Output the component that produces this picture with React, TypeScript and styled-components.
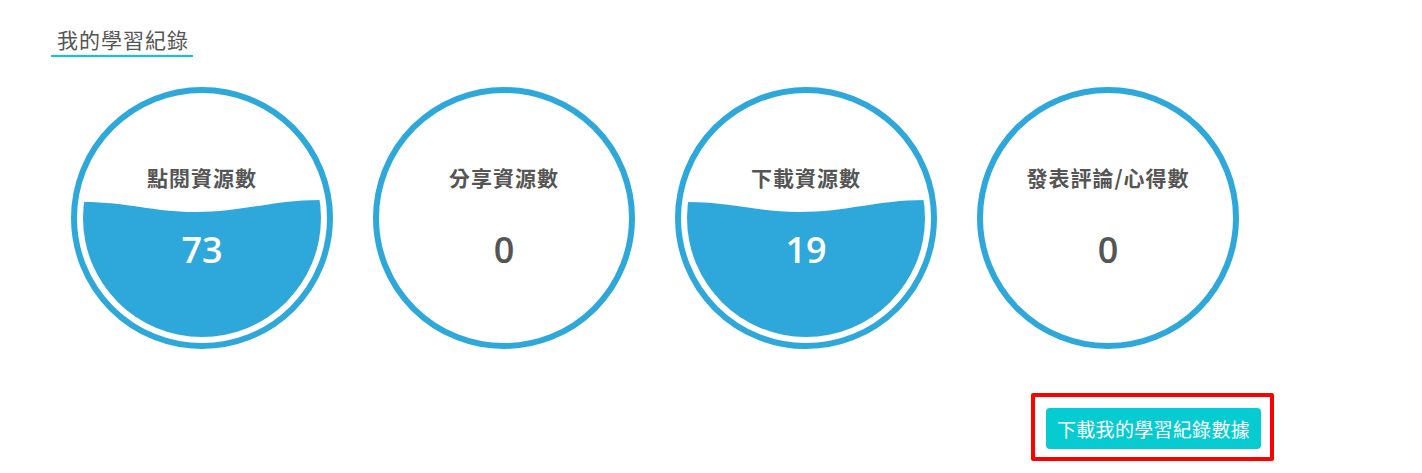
import React from 'react'
import styled, { createGlobalStyle } from 'styled-components'

const GlobalStyle = createGlobalStyle`
  body {
    margin: 0;
    background: #fff;
    font-family: "Open Sans", "Noto Sans CJK TC", sans-serif;
  }
`

const blue = '#2ea8db'
const teal = '#06ccd2'

const Page = styled.div`
  width: 1422px;
  height: 473px;
  padding: 26px 0 0 51px;
  box-sizing: border-box;
`

const SectionTitle = styled.h2`
  display: inline-block;
  margin: 0;
  padding: 0 0 3px 6px;
  width: 142px;
  box-sizing: border-box;
  border-bottom: 2px solid ${teal};
  font-family: "Noto Sans CJK TC", sans-serif;
  font-size: 21px;
  line-height: 26px;
  font-weight: 400;
  color: #555;
  letter-spacing: 1px;
`

const StatsRow = styled.div`
  display: flex;
  gap: 40px;
  margin: 30px 0 0 20px;
`

const Ring = styled.div`
  width: 262px;
  height: 262px;
  box-sizing: border-box;
  border: 6px solid ${blue};
  border-radius: 50%;
  padding: 6px;
`

const Face = styled.div`
  position: relative;
  width: 238px;
  height: 238px;
  border-radius: 50%;
  overflow: hidden;
  display: flex;
  flex-direction: column;
  align-items: center;
  padding-top: 64px;
  box-sizing: border-box;
`

const Water = styled.svg`
  position: absolute;
  inset: 0;
`

const Label = styled.div`
  position: relative;
  font-family: "Noto Sans CJK TC", sans-serif;
  font-size: 21px;
  line-height: 28px;
  font-weight: 700;
  color: #555;
  letter-spacing: 1px;
`

const Count = styled.div<{ $filled: boolean }>`
  position: relative;
  margin-top: 37px;
  font-family: "Open Sans", sans-serif;
  font-size: 36px;
  line-height: 44px;
  font-weight: 600;
  color: ${(p) => (p.$filled ? '#fff' : '#555')};
`

const Footer = styled.div`
  display: flex;
  justify-content: flex-end;
  width: 1223px;
  margin-top: 44px;
`

const Highlight = styled.div`
  border: 4px solid #ff0000;
  border-radius: 2px;
  padding: 11px 9px 8px 11px;
`

const DownloadButton = styled.button`
  width: 215px;
  height: 41px;
  border: none;
  border-radius: 4px;
  background: ${teal};
  color: #fff;
  font-family: "Noto Sans CJK TC", sans-serif;
  font-size: 19px;
  letter-spacing: 0.3px;
  cursor: pointer;
`

const stats = [
  { label: '點閱資源數', count: 73, filled: true },
  { label: '分享資源數', count: 0, filled: false },
  { label: '下載資源數', count: 19, filled: true },
  { label: '發表評論/心得數', count: 0, filled: false },
]

const StatCircle: React.FC<{ label: string; count: number; filled: boolean }> = ({ label, count, filled }) => (
  <Ring>
    <Face>
      {filled && (
        <Water viewBox="0 0 238 238" width="238" height="238">
          <path
            d="M0 103 C 45 103, 70 113, 112 113 C 160 113, 190 101, 238 101 L238 238 L0 238 Z"
            fill={blue}
          />
        </Water>
      )}
      <Label>{label}</Label>
      <Count $filled={filled}>{count}</Count>
    </Face>
  </Ring>
)

const App: React.FC = () => {
  return (
    <>
      <GlobalStyle />
      <Page>
        <SectionTitle>我的學習紀錄</SectionTitle>
        <StatsRow>
          {stats.map((s) => (
            <StatCircle key={s.label} {...s} />
          ))}
        </StatsRow>
        <Footer>
          <Highlight>
            <DownloadButton>下載我的學習紀錄數據</DownloadButton>
          </Highlight>
        </Footer>
      </Page>
    </>
  )
}

export default App
